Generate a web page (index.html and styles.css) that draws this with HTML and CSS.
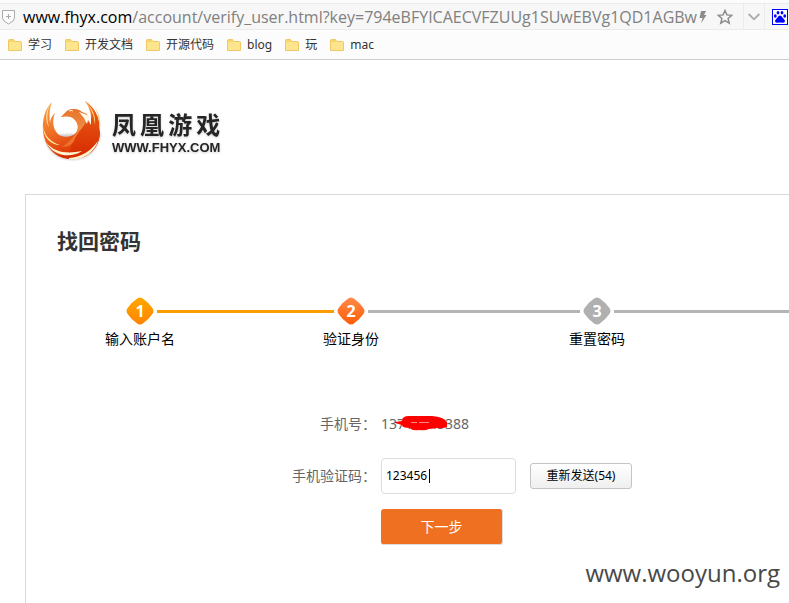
FILE: index.html
```html
<!DOCTYPE html>
<html lang="zh-CN">
<head>
<meta charset="utf-8">
<meta name="viewport" content="width=device-width, initial-scale=1">
<title>找回密码</title>
<link rel="stylesheet" href="styles.css">
</head>
<body>
<svg class="defs" aria-hidden="true">
  <symbol id="folder" viewBox="0 0 14 12">
    <path d="M.5 11.5V1.5Q.5.5 1.5.5H5.5L7 2.5H12.5Q13.5 2.5 13.5 3.5V11.5Z" fill="#fde58e" stroke="#efc765"/>
    <path d="M1 1H5.3L6.5 3H1Z" fill="#f8d568"/>
  </symbol>
</svg>

<header class="browser">
  <div class="address-bar">
    <svg class="shield" viewBox="0 0 14 16" aria-hidden="true">
      <path d="M.5 1.500H12.500V9Q12.500 12 6.500 15Q.5 12 .5 9Z" fill="#fdfdfd" stroke="#aaa"/>
      <path d="M4 7.500H9M6.500 5V10" stroke="#aaa" fill="none"/>
    </svg>
    <div class="url"><span class="host">www.fhyx.com</span>/account/verify_user.html?key=794eBFYICAECVFZUUg1SUwEBVg1QD1AGBw</div>
    <button class="tool tool-flash" aria-label="极速模式">
      <svg viewBox="0 0 8 14" width="8" height="14"><path d="M2 1H7L5 5H7.500L2 13.500L3.500 8H.5Z" fill="#8c8c8c"/></svg>
    </button>
    <button class="tool tool-star" aria-label="收藏">
      <svg viewBox="0 0 16 16" width="16" height="16"><path d="M8 1.500L9.900 5.900L14.700 6.300L11.100 9.500L12.200 14.200L8 11.700L3.800 14.200L4.900 9.500L1.300 6.300L6.100 5.900Z" fill="none" stroke="#8c8c8c" stroke-width="1.500"/></svg>
    </button>
    <button class="tool tool-more" aria-label="更多">
      <svg viewBox="0 0 12 8" width="12" height="8"><path d="M.7 1L6 6.300L11.300 1" fill="none" stroke="#aaa" stroke-width="1.800"/></svg>
    </button>
    <button class="tool tool-search" aria-label="百度">
      <svg viewBox="0 0 16 16" width="16" height="16">
        <rect x=".5" y=".5" width="15" height="15" fill="#fff" stroke="#00f"/>
        <g fill="#00f"><ellipse cx="3.300" cy="7" rx="1.400" ry="1.800"/><ellipse cx="6" cy="3.800" rx="1.400" ry="1.800"/><ellipse cx="10" cy="3.800" rx="1.400" ry="1.800"/><ellipse cx="12.700" cy="7" rx="1.400" ry="1.800"/><path d="M8 6.500Q9.500 6.500 10.500 8.500L12.700 11Q13.500 13.700 11 13.800L8 13.400L5 13.800Q2.500 13.700 3.300 11L5.500 8.500Q6.500 6.500 8 6.500Z"/></g>
      </svg>
    </button>
  </div>
  <nav class="bookmarks">
    <a href="#"><svg><use href="#folder"/></svg>学习</a>
    <a href="#"><svg><use href="#folder"/></svg>开发文档</a>
    <a href="#"><svg><use href="#folder"/></svg>开源代码</a>
    <a href="#"><svg><use href="#folder"/></svg>blog</a>
    <a href="#"><svg><use href="#folder"/></svg>玩</a>
    <a href="#"><svg><use href="#folder"/></svg>mac</a>
  </nav>
</header>

<a class="logo" href="#">
  <svg class="phoenix" viewBox="0 0 61 62" aria-hidden="true">
    <defs>
      <linearGradient id="fire" x1="0" y1="0" x2=".3" y2="1"><stop offset="0" stop-color="#f9a850"/><stop offset=".5" stop-color="#f07428"/><stop offset="1" stop-color="#dc3000"/></linearGradient>
      <linearGradient id="breast" x1="0" y1="0" x2="0" y2="1"><stop offset="0" stop-color="#ea6418"/><stop offset="1" stop-color="#d62800"/></linearGradient>
      <linearGradient id="neck" x1="0" y1="0" x2="0" y2="1"><stop offset="0" stop-color="#e8742c"/><stop offset=".5" stop-color="#f08a42"/><stop offset="1" stop-color="#ee6a24"/></linearGradient>
      <filter id="soft"><feGaussianBlur stdDeviation="1"/></filter>
    </defs>
    <path d="M2 36Q6 61 31 61Q55 60 59 34Z" fill="#999" opacity=".5" filter="url(#soft)"/>
    <path d="M10 3C3 10 0 20 1 32C3 50 15 60 30 60C46 60 58 49 58 32C58 18 52 8 43 2C47 8 49 13 49 20C46 15 43 14 40 13C36 9 27 9 24 13L19 18C22 17 26 17 29 18C36 21 38 29 34 34C29 39 19 39 15 34C11 29 10 22 13 14C10 17 8 20 8 24C7 15 8 8 10 3Z" fill="url(#fire)"/>
    <path d="M49 20C52 14 48 7 43 2C52 8 58 18 58 32C58 49 46 60 30 60Q22 60 16 56Q31 57 29 47Q27 41 34 34Q41 25 49 20Z" fill="url(#breast)"/>
    <path d="M19 18L24 13C27 9 36 9 40 13Q47 18 43 25C38 32 34 36 32 42Q29 48 20 48Q29 42 34 34C38 28 35 21 29 18C26 17 22 17 19 18Z" fill="url(#neck)"/>
    <path d="M37 13L45 16L46 12L49 19L49 26L46 21L45 25L42 19Z" fill="#fffaf0"/>
    <path d="M10 3C5 10 4 19 7 28C3 22 3 11 10 3ZM1 26C2 36 8 43 18 46C8 46 1 38 1 26Z" fill="#ffe9a6"/>
    <path d="M43 2C51 9 54 17 53 26C52 16 49 9 43 2ZM52 7C58 15 60 24 57 33C58 23 56 14 52 7Z" fill="#ffd27a"/>
    <path d="M4 43C12 54 26 55 40 52C28 60 11 57 4 43ZM27 59C39 58 48 53 56 42C52 54 40 62 27 60Z" fill="#fff5d0"/>
    <path d="M27 12Q29 11 31 12" fill="none" stroke="#fff0d8"/>
  </svg>
  <span class="logo-text"><strong><span>凤</span><span>凰</span><span>游</span><span>戏</span></strong><b>WWW.FHYX.COM</b></span>
</a>

<main class="panel">
  <h1>找回密码</h1>
  <ol class="steps">
    <li class="step done"><span class="marker"><svg viewBox="0 0 28 28"><path d="M10.500 2Q14-1 17.500 2Q23 6 26 10.500Q29 14 26 17.500Q22 23 17.500 26Q14 29 10.500 26Q5 22 2 17.500Q-1 14 2 10.500Q6 5 10.500 2Z"/></svg><b>1</b></span><span class="label">输入账户名</span></li>
    <li class="step current"><span class="marker"><svg viewBox="0 0 28 28"><path d="M10.500 2Q14-1 17.500 2Q23 6 26 10.500Q29 14 26 17.500Q22 23 17.500 26Q14 29 10.500 26Q5 22 2 17.500Q-1 14 2 10.500Q6 5 10.500 2Z"/></svg><b>2</b></span><span class="label">验证身份</span></li>
    <li class="step todo"><span class="marker"><svg viewBox="0 0 28 28"><path d="M10.500 2Q14-1 17.500 2Q23 6 26 10.500Q29 14 26 17.500Q22 23 17.500 26Q14 29 10.500 26Q5 22 2 17.500Q-1 14 2 10.500Q6 5 10.500 2Z"/></svg><b>3</b></span><span class="label">重置密码</span></li>
  </ol>
  <svg class="defs" aria-hidden="true">
    <linearGradient id="amber" x1="0" y1="0" x2="0" y2="1"><stop offset="0" stop-color="#ffa800"/><stop offset="1" stop-color="#ff8400"/></linearGradient>
    <linearGradient id="orange" x1="0" y1="0" x2="0" y2="1"><stop offset="0" stop-color="#ff8a48"/><stop offset="1" stop-color="#ff5c08"/></linearGradient>
  </svg>

  <form class="verify">
    <span class="name">手机号：</span>
    <span class="phone">13712345388
      <svg class="redaction" viewBox="0 0 54 16" aria-hidden="true"><path d="M1 7L8 6Q8 1 15 1H38Q50 2 53 7V12Q48 14 43 13L35 14Q31 16 25 15Q18 16 16 13Q8 13 8 10L1 8Z" fill="#f00"/><path d="M17 7.500H23M25 7.500H35" stroke="#ff8a8a"/></svg>
    </span>
    <label class="name" for="code">手机验证码：</label>
    <span class="entry">
      <span class="code-box"><input id="code" type="text" value="123456"><i class="caret"></i></span>
      <button class="resend" type="button">重新发送(54)</button>
    </span>
    <button class="next" type="button">下一步</button>
  </form>
  <p class="watermark">www.wooyun.org</p>
</main>
</body>
</html>
```
FILE: styles.css
```css
* { box-sizing: border-box; }

body {
  margin: 0;
  min-height: 100vh;
  display: flex;
  flex-direction: column;
  overflow: hidden;
  background: #fff;
  color: #000;
  font: 14px/20px "Noto Sans", "Noto Sans CJK SC", sans-serif;
}

a { color: inherit; text-decoration: none; }
button { font: inherit; }
.defs { position: absolute; width: 0; height: 0; }

/* Browser chrome */
.browser {
  padding-top: 3px;
  background: #fcfcfc;
  border-bottom: 1px solid #ccc;
}

.address-bar {
  display: flex;
  align-items: center;
  height: 27px;
  padding-left: 2px;
  background: #f7f7f7;
  border: solid #ebebeb;
  border-width: 1px 0;
}

.shield { width: 14px; height: 16px; flex: none; }

.url {
  flex: 1;
  min-width: 0;
  margin-left: 7px;
  overflow: hidden;
  white-space: nowrap;
  color: #808080;
  font: 16px/24px "Open Sans", "Noto Sans", sans-serif;
}

.host { color: #000; }

.tool {
  display: flex;
  flex: none;
  align-items: center;
  justify-content: center;
  height: 25px;
  padding: 0;
  border: 0;
  background: none;
}

.tool-flash { width: 8px; }
.tool-star { width: 36px; }
.tool-more { width: 22px; border: solid #ebebeb; border-width: 0 1px; }
.tool-search { width: 24px; justify-content: flex-end; padding: 0 1px; }

.bookmarks {
  display: flex;
  gap: 13px;
  height: 29px;
  padding-left: 8px;
  align-items: center;
  color: #333;
  font-size: 12px;
}

.bookmarks a { display: flex; align-items: center; gap: 6px; }
.bookmarks svg { width: 14px; height: 12px; }

/* Site logo */
.logo {
  display: flex;
  align-self: flex-start;
  gap: 9px;
  margin: 39px 0 33px 42px;
}

.phoenix { width: 61px; height: 62px; }

.logo-text {
  display: flex;
  flex-direction: column;
  padding-top: 7px;
  color: #252525;
  filter: drop-shadow(0 1px 1px #ccc);
}

.logo-text strong {
  display: flex;
  justify-content: space-between;
  font: bold 24px/35px "Noto Sans CJK SC", sans-serif;
}
.logo-text b { font: bold 13px/14px "Liberation Sans", sans-serif; }

/* Password recovery panel */
.panel {
  flex: 1;
  display: flex;
  flex-direction: column;
  margin-left: 25px;
  border: solid #d9d9d9;
  border-width: 1px 0 0 1px;
}

h1 {
  margin: 30px 0 0 31px;
  color: #333;
  font: bold 21px/30px "Noto Sans CJK SC", sans-serif;
}

.steps {
  display: flex;
  margin: 42px 0 0 100px;
  padding: 0;
  list-style: none;
}

.step {
  display: grid;
  grid-template-columns: 28px 1fr;
  align-items: center;
  row-gap: 4px;
}

.step.done { flex: 211; }
.step.current { flex: 246; }
.step.todo { flex: 206; }

.step::after {
  content: "";
  grid-area: 1 / 2;
  height: 3px;
  margin: 0 3px;
  background: #b5b5b5;
}

.step.done::after { background: #fa9d00; }
.step.todo::after { margin-right: 0; }

.marker {
  display: grid;
  grid-area: 1 / 1;
  place-items: center;
  color: #fff;
  font: 16px/28px "Open Sans", sans-serif;
}

.marker svg, .marker b { grid-area: 1 / 1; }
.marker svg { width: 28px; height: 28px; }
.done path { fill: url(#amber); }
.current path { fill: url(#orange); }
.todo path { fill: #b0b0b0; }

.label {
  grid-area: 2 / 1;
  justify-self: center;
  white-space: nowrap;
}

.verify {
  display: grid;
  grid-template-columns: 350px 1fr;
  grid-template-rows: 38px 36px 36px;
  gap: 15px 5px;
  align-items: center;
  margin-top: 56px;
  color: #666;
}

.name { text-align: right; }
.phone { position: relative; }

.redaction {
  position: absolute;
  left: 13px;
  top: 1px;
  width: 54px;
  height: 16px;
}

.entry { display: flex; align-items: center; gap: 14px; }

.code-box {
  display: flex;
  align-items: center;
  position: relative;
  width: 135px;
  height: 36px;
  border: 1px solid #ddd;
  border-radius: 4px;
}

.code-box input {
  width: 100%;
  padding: 0 4px;
  border: 0;
  outline: 0;
  background: none;
  font: 12px/20px "Noto Sans", sans-serif;
}

.caret {
  position: absolute;
  left: 47px;
  width: 1px;
  height: 14px;
  background: #000;
}

.resend {
  width: 102px;
  height: 26px;
  padding: 0;
  border: 1px solid #c4c4c4;
  border-radius: 3px;
  background: linear-gradient(#fff, #efefef);
  color: #000;
  font-size: 12px;
}

.next {
  grid-column: 2;
  justify-self: start;
  width: 122px;
  height: 36px;
  padding: 0;
  border: solid #ddd;
  border-width: 0 1px 1px 0;
  border-radius: 3px;
  background: #f07022;
  color: #fff;
}

.watermark {
  align-self: flex-end;
  margin: 11px 9px 0 0;
  color: #484848;
  font: 24px/34px "Open Sans", sans-serif;
}
```
